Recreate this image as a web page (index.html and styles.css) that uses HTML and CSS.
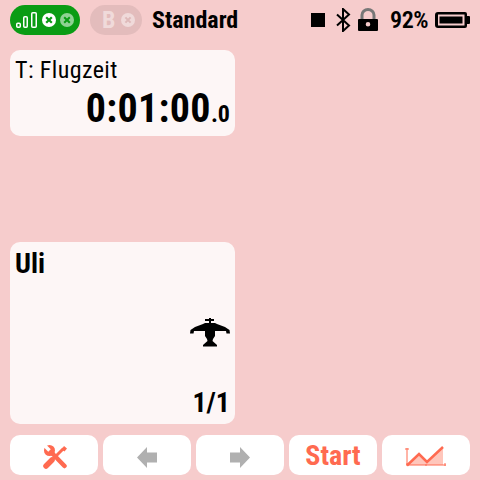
FILE: index.html
```html
<!DOCTYPE html>
<html lang="de">
<head>
<meta charset="utf-8">
<title>Standard</title>
<link rel="stylesheet" href="styles.css">
</head>
<body>
<div class="screen">
  <header class="topbar">
    <div class="pill pill-green">
      <svg class="signal" width="22" height="16" viewBox="0 0 22 16"><g fill="none" stroke="#fff" stroke-width="1.500"><rect x="0.750" y="11.250" width="3.500" height="4" rx="1"/><rect x="7.750" y="4.750" width="3.500" height="10.500" rx="1"/><rect x="15.750" y="0.750" width="4.500" height="14.500" rx="1"/></g></svg>
      <svg class="x" width="14" height="14" viewBox="0 0 14 14"><circle cx="7" cy="7" r="7" fill="#fff"/><path d="M4.200 4.200l5.600 5.600M9.800 4.200l-5.600 5.600" stroke="#0a9c14" stroke-width="2.200"/></svg>
      <svg class="x" width="14" height="14" viewBox="0 0 14 14"><circle cx="7" cy="7" r="7" fill="#8fd294"/><path d="M4.200 4.200l5.600 5.600M9.800 4.200l-5.600 5.600" stroke="#0a9c14" stroke-width="2"/></svg>
    </div>
    <div class="pill pill-grey">
      <span class="b">B</span>
      <svg class="x" width="14" height="14" viewBox="0 0 14 14"><circle cx="7" cy="7" r="7" fill="#f0dada"/><path d="M4.400 4.400l5.200 5.200M9.600 4.400l-5.200 5.200" stroke="#deb9b9" stroke-width="2"/></svg>
    </div>
    <span class="mode">Standard</span>
    <div class="status">
      <span class="square"></span>
      <svg class="bt" width="15" height="24" viewBox="0 0 15 24"><path d="M1 6.500l12 11-6 5.500V1l6 5.500-12 11" fill="none" stroke="#000" stroke-width="2"/></svg>
      <svg class="lock" width="22" height="24" viewBox="0 0 22 24"><path d="M5 11V7a6 5.500 0 0 1 12 0v4" fill="none" stroke="#777" stroke-width="3"/><path fill="#000" fill-rule="evenodd" d="M2 11h18a1 1 0 0 1 1 1v10a1 1 0 0 1-1 1H2a1 1 0 0 1-1-1V12a1 1 0 0 1 1-1zm9 3a2.300 2.300 0 1 0 0 4.600A2.300 2.300 0 0 0 11 14z"/></svg>
      <span class="pct">92%</span>
      <svg width="35" height="16" viewBox="0 0 35 16"><path fill="#000" fill-rule="evenodd" d="M3 0h27a2 2 0 0 1 2 2v2h2a1 1 0 0 1 1 1v6a1 1 0 0 1-1 1h-2v2a2 2 0 0 1-2 2H3a3 3 0 0 1-3-3V3a3 3 0 0 1 3-3zm0 2.500V13.500h26.500V2.500z"/><rect x="4.500" y="4.500" width="23" height="7" fill="#000"/></svg>
    </div>
  </header>
  <main class="content">
    <section class="card timer">
      <div class="label">T: Flugzeit</div>
      <div class="time">0:01:00<span class="tenth">.0</span></div>
    </section>
    <section class="card model">
      <div class="name">Uli</div>
      <svg class="plane" width="40" height="29" viewBox="0 0 40 29"><path fill="#000" d="M15 1h9v2h-9zM19 0h2v5h-2z"/><path fill="#000" d="M0 15.500l.5-3.500 4.500-3 8-3 2-1h10l2 1 8 3 4.500 3 .5 3.500h-3.500l-.5-2.500H25v5l-2 3-.5 2 4.500 4v1.500H13V27l4.500-4-.5-2-2-3v-5H4l-.5 2.500z"/></svg>
      <div class="count">1/1</div>
    </section>
  </main>
  <nav class="buttons">
    <div class="btn"><svg width="26" height="28" viewBox="41 441 26 28"><g fill="none" stroke="#ff6a50" stroke-linecap="round"><path d="M50 451l14.500 15" stroke-width="4.500"/><path d="M52 460l-6 6" stroke-width="5.500"/></g><path d="M51.500 460.500l12-12" stroke="#ff6a50" stroke-width="3" fill="none"/><path fill="#ff6a50" d="M64 446l3 2.500-2.500 3-3-2z"/><circle cx="49.500" cy="450.500" r="5.500" fill="#ff6a50"/><path d="M49.500 450.500l-6.500-6.500" stroke="#fff" stroke-width="3.500" fill="none"/></svg></div>
    <div class="btn"><svg width="22" height="26" viewBox="0 -1 22 26"><path fill="#b0b0b0" d="M1 14.500L11 4v5.500h10v10H11V25z"/></svg></div>
    <div class="btn"><svg width="22" height="26" viewBox="0 -1 22 26"><path fill="#b0b0b0" d="M21 14.500L11 4v5.500H1v10h10V25z"/></svg></div>
    <div class="btn start">Start</div>
    <div class="btn"><svg width="42" height="24" viewBox="0 -1 42 24"><path fill="#ffc6bb" d="M2 21l12-11 8 8L38 3v18z"/><path d="M2 21.500l12-11.500 8 8L38 3" fill="none" stroke="#ff6a50" stroke-width="2.500"/><path d="M2 4v17h39M2 19v3M21 20v2M40 19v3M0 5h4" fill="none" stroke="#ff6a50" stroke-width="1"/></svg></div>
  </nav>
</div>
</body>
</html>
```
FILE: styles.css
```css
* { box-sizing: border-box; }
html, body { margin: 0; padding: 0; }
body { width: 480px; height: 480px; overflow: hidden; background: #f6cccc; font-family: Roboto, "Liberation Sans", sans-serif; font-stretch: 87%; color: #000; }
.screen { width: 480px; height: 480px; display: flex; flex-direction: column; }
.topbar { height: 40px; padding: 5px 10px; display: flex; align-items: center; }
.pill { height: 30px; border-radius: 15px; display: flex; align-items: center; flex: none; }
.pill-green { width: 70px; background: #0a9c14; padding-left: 6px; gap: 4px; margin-right: 10px; }
.x { flex: none; }
.pill-grey { width: 52px; background: #e3bcbc; padding-left: 12px; margin-right: 10px; gap: 6px; }
.b { font-size: 24px; font-weight: 700; color: #f0dada; line-height: 1; }
.mode { font-size: 24px; font-weight: 700; }
.status { margin-left: auto; display: flex; align-items: center; }
.square { width: 14px; height: 14px; background: #000; margin-right: 11px; }
.lock { margin: 0 11px 0 6px; }
.pct { font-size: 24px; font-weight: 600; letter-spacing: -0.5px; margin-right: 7px; }
.content { height: 374px; margin: 10px 0 0 10px; width: 225px; display: flex; flex-direction: column; justify-content: space-between; flex: none; }
.card { background: #fdf6f6; border-radius: 10px; padding: 5px; }
.timer { height: 86px; padding-top: 6px; }
.label { font-size: 24px; line-height: 28px; letter-spacing: 0.4px; }
.time { font-size: 40px; font-weight: 700; line-height: 44px; text-align: right; margin-top: 3px; letter-spacing: 0.3px; }
.tenth { font-size: 24px; letter-spacing: 0; }
.model { height: 182px; display: flex; flex-direction: column; align-items: stretch; }
.name { font-size: 28px; font-weight: 700; line-height: 32px; margin-top: 1px; }
.plane { align-self: flex-end; margin-top: 38px; }
.count { margin-top: auto; font-size: 28px; font-weight: 700; line-height: 32px; text-align: right; }
.buttons { height: 40px; margin: 11px 10px 0; display: flex; gap: 5px; }
.btn { flex: 1; background: #fff; border-radius: 10px; display: flex; align-items: center; justify-content: center; }
.start { font-size: 28px; font-weight: 700; color: #ff6a50; }
```
